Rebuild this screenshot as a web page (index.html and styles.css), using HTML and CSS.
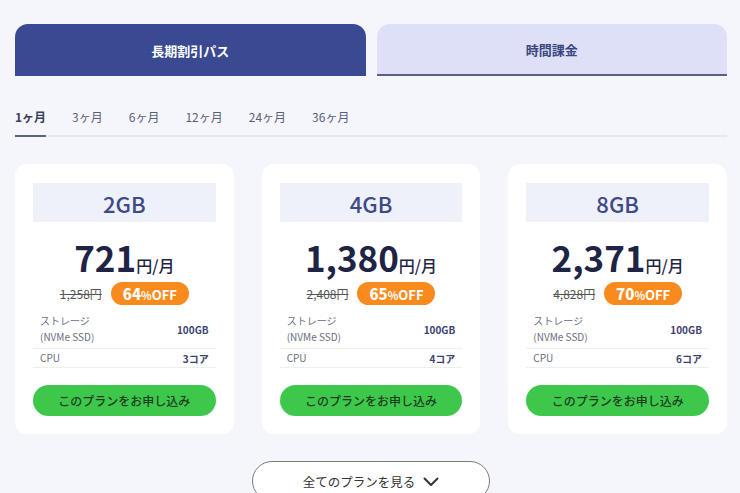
FILE: index.html
```html
<!DOCTYPE html>
<html lang="ja">
<head>
<meta charset="utf-8">
<link rel="stylesheet" href="styles.css">
</head>
<body>
<div class="page">
  <div class="tabs">
    <div class="tab tab-active">長期割引パス</div>
    <div class="tab tab-inactive">時間課金</div>
  </div>
  <div class="periods">
    <span class="period period-active">1ヶ月</span>
    <span class="period">3ヶ月</span>
    <span class="period">6ヶ月</span>
    <span class="period">12ヶ月</span>
    <span class="period">24ヶ月</span>
    <span class="period">36ヶ月</span>
  </div>
  <div class="cards">
    <div class="card">
      <div class="card-head">2GB</div>
      <div class="price"><span class="num">721</span><span class="unit">円/月</span></div>
      <div class="disc"><span class="old">1,258円</span><span class="badge"><b>64</b><small>%</small>OFF</span></div>
      <div class="spec"><span class="label">ストレージ<br>(NVMe SSD)</span><span class="val">100GB</span></div>
      <div class="spec spec-cpu"><span class="label">CPU</span><span class="val">3コア</span></div>
      <div class="apply">このプランをお申し込み</div>
    </div>
    <div class="card">
      <div class="card-head">4GB</div>
      <div class="price"><span class="num">1,380</span><span class="unit">円/月</span></div>
      <div class="disc"><span class="old">2,408円</span><span class="badge"><b>65</b><small>%</small>OFF</span></div>
      <div class="spec"><span class="label">ストレージ<br>(NVMe SSD)</span><span class="val">100GB</span></div>
      <div class="spec spec-cpu"><span class="label">CPU</span><span class="val">4コア</span></div>
      <div class="apply">このプランをお申し込み</div>
    </div>
    <div class="card">
      <div class="card-head">8GB</div>
      <div class="price"><span class="num">2,371</span><span class="unit">円/月</span></div>
      <div class="disc"><span class="old">4,828円</span><span class="badge"><b>70</b><small>%</small>OFF</span></div>
      <div class="spec"><span class="label">ストレージ<br>(NVMe SSD)</span><span class="val">100GB</span></div>
      <div class="spec spec-cpu"><span class="label">CPU</span><span class="val">6コア</span></div>
      <div class="apply">このプランをお申し込み</div>
    </div>
  </div>
  <div class="more-wrap">
    <div class="more">全てのプランを見る
      <svg class="chev" width="16" height="10" viewBox="0 0 16 10"><path d="M1.5 1.5 L8 8 L14.5 1.5" fill="none" stroke="#333" stroke-width="2" stroke-linecap="round" stroke-linejoin="round"/></svg>
    </div>
  </div>
</div>
</body>
</html>
```
FILE: styles.css
```css
* { box-sizing: border-box; }
html, body { margin: 0; padding: 0; }
body {
  background: #f5f6fc;
  font-family: "Noto Sans CJK JP", "Noto Sans", sans-serif;
  color: #222;
  overflow: hidden;
  height: 493px;
}
.page {
  width: 712px;
  margin-left: 15px;
  padding-top: 24px;
}
.tabs {
  display: flex;
  gap: 11px;
}
.tab {
  flex: 1;
  height: 52px;
  border-radius: 13px 13px 0 0;
  display: flex;
  align-items: center;
  justify-content: center;
  font-size: 13px;
  font-weight: 700;
}
.tab-active {
  background: #3a4a92;
  color: #fff;
}
.tab-inactive {
  background: #dde0f6;
  color: #3c4780;
  border-bottom: 2px solid #5c6084;
}
.periods {
  display: flex;
  gap: 26px;
  padding-top: 33px;
  border-bottom: 2px solid #e4e6f0;
}
.period {
  font-size: 12px;
  line-height: 16px;
  color: #5a5f78;
  padding-bottom: 10px;
  margin-bottom: -2px;
  border-bottom: 2px solid transparent;
}
.period-active {
  color: #3a3f5e;
  font-weight: 700;
  border-bottom-color: #5b6185;
}
.cards {
  display: grid;
  grid-template-columns: repeat(3, 1fr);
  gap: 28px;
  margin-top: 27px;
}
.card {
  background: #fff;
  border-radius: 12px;
  padding: 19px 18px 19px;
  height: 270px;
}
.card-head {
  background: #eef0fa;
  height: 39px;
  display: flex;
  align-items: center;
  justify-content: center;
  font-size: 22px;
  font-weight: 500;
  color: #3d4a86;
}
.price {
  text-align: center;
  margin-top: 13px;
  height: 44px;
  line-height: 44px;
  color: #1f2444;
}
.price .num {
  font-size: 35px;
  font-weight: 700;
}
.price .unit {
  font-size: 16px;
  font-weight: 500;
}
.disc {
  display: flex;
  justify-content: center;
  align-items: center;
  gap: 9px;
  margin-top: 3px;
}
.old {
  font-size: 12px;
  color: #555;
  text-decoration: line-through;
}
.badge {
  background: #f98b1e;
  color: #fff;
  height: 23px;
  width: 78px;
  border-radius: 12px;
  display: flex;
  align-items: baseline;
  justify-content: center;
  font-size: 13px;
  font-weight: 700;
  line-height: 23px;
}
.badge b { font-size: 15px; }
.badge small { font-size: 11px; font-weight: 700; }
.spec {
  display: flex;
  justify-content: space-between;
  align-items: center;
  padding: 2px 7px 3px;
  border-bottom: 1px solid #eceef3;
  margin-top: 6px;
}
.spec-cpu {
  margin-top: 0;
  height: 19px;
  padding: 0 7px;
}
.label {
  font-size: 10px;
  line-height: 16px;
  color: #6a6d7e;
}
.val {
  font-size: 10px;
  font-weight: 700;
  color: #3d4270;
}
.apply {
  margin-top: 17px;
  height: 31px;
  border-radius: 16px;
  background: #3ec84b;
  color: #1f3b22;
  font-size: 12px;
  font-weight: 500;
  display: flex;
  align-items: center;
  justify-content: center;
}
.more-wrap {
  display: flex;
  justify-content: center;
  margin-top: 27px;
}
.more {
  width: 238px;
  height: 40px;
  border: 1.5px solid #7a7a80;
  border-radius: 20px;
  background: #fff;
  display: flex;
  align-items: center;
  justify-content: center;
  gap: 8px;
  font-size: 12.5px;
  color: #333;
}
.chev { margin-top: 1px; }
```
